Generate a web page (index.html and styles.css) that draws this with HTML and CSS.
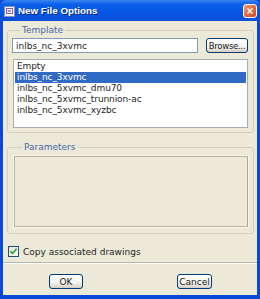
FILE: index.html
```html
<!DOCTYPE html>
<html>
<head>
<meta charset="utf-8">
<link rel="stylesheet" href="styles.css">
</head>
<body>
<div class="window">
  <div class="titlebar">
    <svg class="app-icon" width="11" height="11" viewBox="0 0 11 11">
      <rect x="0.5" y="0.5" width="10" height="10" fill="#f4f4f8" stroke="#8a8fb8"/>
      <rect x="2.5" y="2.5" width="6" height="5" fill="none" stroke="#8d5fa8"/>
      <rect x="4" y="4" width="3" height="2" fill="#b48ad0"/>
    </svg>
    <span class="title">New File Options</span>
    <div class="close">
      <svg width="14" height="14" viewBox="0 0 14 14">
        <path d="M4 4 L10 10 M10 4 L4 10" stroke="#fff" stroke-width="2" stroke-linecap="round"/>
      </svg>
    </div>
  </div>
  <div class="client">
    <fieldset class="group template">
      <legend>Template</legend>
      <div class="pick-row">
        <div class="textbox">inlbs_nc_3xvmc</div>
        <button class="btn browse">Browse...</button>
      </div>
      <ul class="listbox">
        <li>Empty</li>
        <li class="selected">inlbs_nc_3xvmc</li>
        <li>inlbs_nc_5xvmc_dmu70</li>
        <li>inlbs_nc_5xvmc_trunnion-ac</li>
        <li>inlbs_nc_5xvmc_xyzbc</li>
      </ul>
    </fieldset>
    <fieldset class="group params">
      <legend>Parameters</legend>
      <div class="panel"></div>
    </fieldset>
    <label class="check-row">
      <span class="checkbox">
        <svg width="9" height="9" viewBox="0 0 9 9"><path d="M1.5 4.2 L3.6 6.4 L7.6 1.8" fill="none" stroke="#21a121" stroke-width="1.6"/></svg>
      </span>
      <span>Copy associated drawings</span>
    </label>
    <div class="separator"></div>
    <div class="actions">
      <button class="btn ok">OK</button>
      <button class="btn cancel">Cancel</button>
    </div>
  </div>
</div>
</body>
</html>
```

FILE: styles.css
```css
* { box-sizing: border-box; }
html, body { margin: 0; padding: 0; }
body {
  width: 260px;
  height: 299px;
  overflow: hidden;
  font-family: "DejaVu Sans", "Liberation Sans", sans-serif;
  font-size: 9px;
  color: #262626;
}
.window {
  width: 260px;
  height: 299px;
  display: flex;
  flex-direction: column;
  background: #0a49d8;
  padding: 0 3px 4px 3px;
}
.titlebar {
  height: 21px;
  margin: 0 -3px;
  padding: 0 3px 0 4px;
  display: flex;
  align-items: center;
  background: linear-gradient(to bottom, #3a86f2 0%, #0a5ee8 22%, #0556e2 60%, #0a4fd8 100%);
  border-radius: 6px 6px 0 0;
}
.app-icon { flex: none; margin-top: 1px; }
.title {
  margin-left: 3px;
  color: #fff;
  font-family: "Liberation Sans", sans-serif;
  font-weight: bold;
  font-size: 9.8px;
  text-shadow: 1px 1px 0 #0a2a8a;
  flex: 1;
}
.close {
  width: 14px;
  height: 14px;
  border: 1px solid #fff;
  border-radius: 3px;
  background: linear-gradient(135deg, #f0a080 0%, #e46a3e 50%, #d2472a 100%);
  display: flex;
  align-items: center;
  justify-content: center;
}
.close svg { width: 10px; height: 10px; }
.client {
  flex: 1;
  background: #ece9d8;
  display: flex;
  flex-direction: column;
  padding: 3px 3px 0 4px;
}
.group {
  margin: 0;
  border: 1px solid #d0d0bf;
  border-radius: 3px;
  min-width: 0;
}
.group legend {
  color: #4a67a8;
  padding: 0 2px;
  margin-left: 8px;
  line-height: 12px;
  font-size: 9px;
}
.template { padding: 2px 5px 4px 4px; }
.pick-row {
  display: flex;
  align-items: center;
  gap: 8px;
}
.textbox {
  width: 186px;
  height: 15px;
  border: 1px solid #7f9db9;
  background: #fff;
  padding: 1px 3px;
  line-height: 12px;
  white-space: nowrap;
}
.btn {
  font-family: "DejaVu Sans", "Liberation Sans", sans-serif;
  font-size: 9px;
  color: #222;
  height: 15px;
  padding: 0;
  border: 1px solid #003c74;
  border-radius: 3px;
  background: linear-gradient(to bottom, #ffffff 0%, #f3f3ef 60%, #d6d0c5 100%);
  box-shadow: inset 0 -1px 0 #d6d0c5;
  white-space: nowrap;
}
.browse { width: 42px; font-size: 8.5px; letter-spacing: -0.3px; }
.listbox {
  list-style: none;
  margin: 6px 0 0 1px;
  padding: 1px 1px;
  height: 69px;
  border: 1px solid #a5acb5;
  background: #fff;
}
.listbox li {
  height: 11px;
  line-height: 11px;
  padding-left: 2px;
  white-space: nowrap;
  letter-spacing: -0.1px;
}
.listbox li.selected {
  background: #316ac5;
  color: #fff;
}
.params {
  margin-top: 8px;
  padding: 3px 5px 6px 6px;
}
.panel {
  height: 71px;
  border: 1px solid #b8b4a2;
  border-right-color: #a8a592;
  box-shadow: 0 0 0 1px #f6f5ee;
  background: #ece9d8;
}
.check-row {
  display: flex;
  align-items: center;
  gap: 4px;
  margin-top: 12px;
  padding-left: 1px;
}
.checkbox {
  width: 11px;
  height: 11px;
  border: 1px solid #1c5180;
  background: linear-gradient(135deg, #e4e3dc, #fbfbf9);
  display: flex;
  align-items: center;
  justify-content: center;
}
.separator {
  margin: 5px -3px 0 -4px;
  height: 2px;
  border-top: 1px solid #b9b6a5;
  border-bottom: 1px solid #fbfbf8;
}
.actions {
  display: flex;
  padding-left: 42px;
  margin-top: 10px;
}
.ok { width: 34px; }
.cancel { width: 35px; margin-left: 94px; }
```
